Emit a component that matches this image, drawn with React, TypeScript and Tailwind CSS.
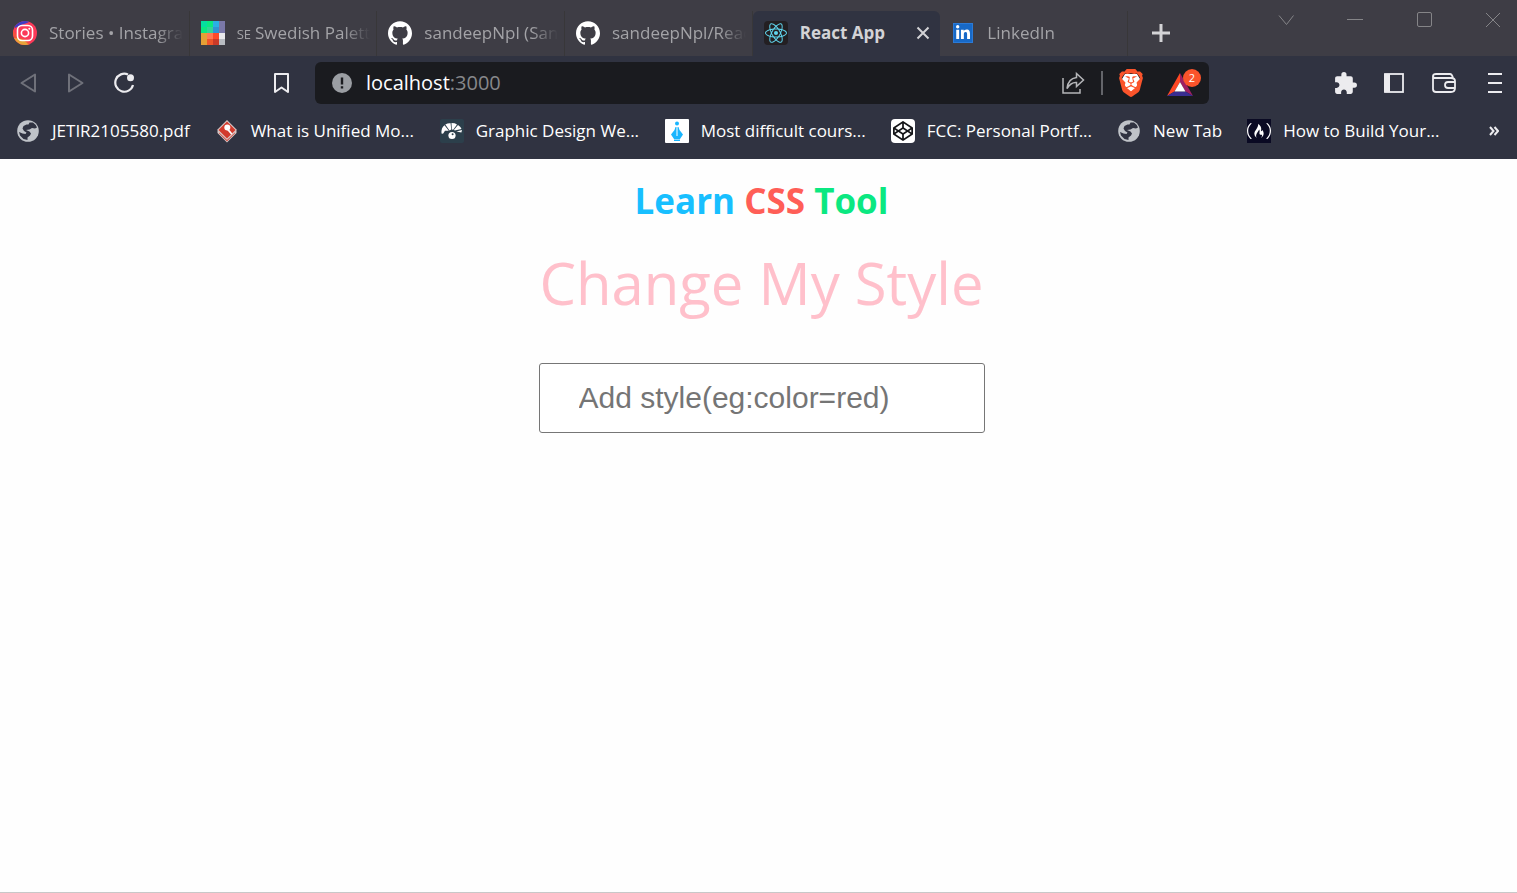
import { useState } from "react";
import type { ReactNode } from "react";
import { SiGithub, SiReact, SiBrave, SiFreecodecamp } from "react-icons/si";
import { MdExtension } from "react-icons/md";
import { FaCodepen, FaLinkedinIn } from "react-icons/fa";

const InstagramIcon = () => (
  <svg viewBox="0 0 24 24" className="size-6 shrink-0" aria-hidden="true">
    <defs>
      <clipPath id="ig-clip">
        <circle cx="12" cy="12" r="12" />
      </clipPath>
    </defs>
    <g clipPath="url(#ig-clip)">
      <rect width="24" height="24" fill="#fb3958" />
      <path d="M0 0h18l-4 2-6 2-6 3z" fill="#3f3cc4" />
      <path d="M0 8q3 6 6 8l8 3 4 5H0z" fill="#f5513c" />
      <path d="M1 17l7 1 5 3 3 3H4z" fill="#e8a33a" />
    </g>
    <rect x="4.500" y="4.500" width="15" height="15" rx="4.500" fill="none" stroke="#fff" strokeWidth="1.600" />
    <circle cx="12" cy="12" r="3.600" fill="none" stroke="#fff" strokeWidth="1.600" />
    <circle cx="16.300" cy="7.700" r="1" fill="#fff" />
  </svg>
);

const PaletteIcon = () => (
  <svg viewBox="0 0 24 24" className="size-6 shrink-0" shapeRendering="crispEdges" aria-hidden="true">
    <path fill="#0be881" d="M0 0h12v12H0z" />
    <path fill="#05dfa0" d="M0 0h6v6H0z" />
    <path fill="#34d399" d="M6 6h6v6H6z" />
    <path fill="#2ab0e4" d="M12 0h6v6h-6z" />
    <path fill="#3094d4" d="M12 6h6v6h-6z" />
    <path fill="#7a78a8" d="M18 0h6v12h-6z" />
    <path fill="#e5a035" d="M0 12h6v12H0z" />
    <path fill="#f0552a" d="M6 12h6v12H6z" />
    <path fill="#ff7a52" d="M6 12h6v6H6z" />
    <path fill="#ff4a28" d="M12 12h6v6h-6z" />
    <path fill="#c93a28" d="M12 18h6v6h-6z" />
    <path fill="#e9e9ec" d="M18 12h6v6h-6z" />
    <path fill="#b8bcc2" d="M18 18h6v6h-6z" />
  </svg>
);

const ReactIcon = () => (
  <span className="flex size-6 shrink-0 items-center justify-center rounded-sm bg-[#231f22]">
    <SiReact className="size-[22px] text-[#5fd3ec]" />
  </span>
);

const LinkedInIcon = () => (
  <span className="flex size-6 shrink-0 items-center justify-center">
    <span className="flex size-5 items-center justify-center border border-[#2b7ad6] bg-[#1769c7]">
      <FaLinkedinIn className="size-4 text-white" />
    </span>
  </span>
);

const GlobeIcon = () => (
  <svg viewBox="0 0 24 24" className="size-6 shrink-0" aria-hidden="true">
    <circle cx="12" cy="12" r="10.800" fill="#bfc3c8" />
    <path
      d="M13.500 3.500h3.500q3 2 4 5l-2 1-3-.5-2.500 1.500-3.500.5 3.500 1.500 1.500 2-1 2-2.500 2v2.500l-4-1-3.500-3.500-1-3.500 3.500 1.500 3 .5 1-1.500-2.500-1.500-1.500-2.500 1-2.500 3-1.500h2z"
      fill="#303341"
    />
  </svg>
);

const UmlIcon = () => (
  <svg viewBox="0 0 24 24" className="size-6 shrink-0" aria-hidden="true">
    <path d="M12 1L21.500 10.500v3.500L12 23.500 2.500 14v-3.500z" fill="#d9c8c6" />
    <path d="M12 2.500L20.500 11 12 19.500 3.500 11z" fill="#d23a2c" />
    <path d="M4 13.600l8 7.400 8-7.400v.6L12 22.300 4 14.200z" fill="#d23a2c" />
    <circle cx="12.300" cy="8.600" r="3" fill="#fff" />
    <path d="M12.500 8.500l-.4 2.500 4.200 4.700 1-1.200-2.600-3.300z" fill="#fff" />
  </svg>
);

const ChameleonIcon = () => (
  <svg viewBox="0 0 24 24" className="size-6 shrink-0" aria-hidden="true">
    <rect width="24" height="24" rx="2" fill="#2c3f4b" />
    <path d="M1.500 14.500Q1 8.500 4.500 6.200l4.300 5.600-3.800-.1-2 3z" fill="#fff" />
    <path d="M5.300 5.600Q8 3.800 10.600 4.200l.6 6.400-1.700.8z" fill="#fff" />
    <path d="M11.500 4q3.600 0 5.500 1.400l-3.800 5.400-1.400-.4z" fill="#fff" />
    <path d="M18 6q3 1.800 3.500 4l-6.800 1.400-.7-.7z" fill="#fff" />
    <path d="M22 11l-.6 2.600-5-1z" fill="#fff" />
    <circle cx="12" cy="16.500" r="3.600" fill="#fff" />
    <circle cx="12.600" cy="15.200" r="1" fill="#2c3f4b" />
  </svg>
);

const PenIcon = () => (
  <svg viewBox="0 0 24 24" className="size-6 shrink-0" aria-hidden="true">
    <rect width="24" height="24" rx="1" fill="#fff" />
    <circle cx="12" cy="4.500" r="2" fill="#19b5fe" />
    <path d="M10.500 8h3l1 3 3.500 4.500L15 20H9l-3-4.500L9.500 11z" fill="#19b5fe" />
    <path d="M9 20.500h6V22H9z" fill="#19b5fe" />
    <path d="M11.500 7h1v10h-1z" fill="#fff" />
  </svg>
);

const CodepenIcon = () => (
  <span className="flex size-6 shrink-0 items-center justify-center rounded-sm bg-white">
    <FaCodepen className="size-5 text-[#131417]" />
  </span>
);

const FreeCodeCampIcon = () => (
  <span className="flex size-6 shrink-0 items-center justify-center bg-[#0a0a23]">
    <SiFreecodecamp className="size-6 text-white" />
  </span>
);

type Tab = { title: string; icon: ReactNode; flag?: string; active?: boolean };

const tabs: Tab[] = [
  { title: "Stories • Instagram", icon: <InstagramIcon /> },
  { title: "Swedish Palette", flag: "SE", icon: <PaletteIcon /> },
  { title: "sandeepNpl (Sandeep)", icon: <SiGithub className="size-6 shrink-0 text-white" /> },
  { title: "sandeepNpl/React", icon: <SiGithub className="size-6 shrink-0 text-white" /> },
  { title: "React App", icon: <ReactIcon />, active: true },
  { title: "LinkedIn", icon: <LinkedInIcon /> },
];

type Bookmark = { title: string; icon: ReactNode; shortened?: boolean };

const bookmarks: Bookmark[] = [
  { title: "JETIR2105580.pdf", icon: <GlobeIcon /> },
  { title: "What is Unified Mo...", icon: <UmlIcon />, shortened: true },
  { title: "Graphic Design We...", icon: <ChameleonIcon />, shortened: true },
  { title: "Most difficult cours...", icon: <PenIcon />, shortened: true },
  { title: "FCC: Personal Portf...", icon: <CodepenIcon />, shortened: true },
  { title: "New Tab", icon: <GlobeIcon /> },
  { title: "How to Build Your...", icon: <FreeCodeCampIcon /> },
];

function TabStrip() {
  return (
    <div className="flex h-14 bg-[#3e3d45]">
      <div className="flex max-w-[1128px] flex-1 pt-[11px] pl-0.5">
        {tabs.map((tab) =>
          tab.active ? (
            <div
              key={tab.title}
              className="flex h-[45px] min-w-0 flex-1 items-center gap-3 rounded-t-md bg-[#303341] pr-[7px] pb-0.5 pl-[11px]"
            >
              {tab.icon}
              <span className="flex-1 truncate text-[17px] font-bold text-[#d3d3d6]">{tab.title}</span>
              <button aria-label="Close tab" className="mr-0.5 text-[#d3d3d6]">
                <svg viewBox="0 0 16 16" className="size-4" fill="none" stroke="currentColor" strokeWidth="2">
                  <path d="M2.500 2.500l11 11M13.500 2.500l-11 11" />
                </svg>
              </button>
            </div>
          ) : (
            <button
              key={tab.title}
              className="flex h-[45px] min-w-0 flex-1 items-center gap-3 border-r border-[#383739] pr-1.5 pb-0.5 pl-[11px] text-left"
            >
              {tab.icon}
              <span className="flex-1 overflow-hidden mask-r-from-80% mask-r-to-100% text-[17px] whitespace-nowrap text-[#a3a3a7]">
                {tab.flag && <span className="mr-1 text-[13px]">{tab.flag}</span>}
                {tab.title}
              </span>
            </button>
          ),
        )}
      </div>
      <button aria-label="New tab" className="ml-5 px-1 pt-2.5 text-[#d3d3d6]">
        <svg viewBox="0 0 18 18" className="size-[18px]" fill="none" stroke="currentColor" strokeWidth="3">
          <path d="M9 0v18M0 9h18" />
        </svg>
      </button>
      <div className="ml-auto flex items-start gap-[53px] pt-3 pr-4 text-[#858588]">
        <button aria-label="Search tabs">
          <svg viewBox="0 0 16 16" className="size-4" fill="none" stroke="currentColor">
            <path d="M1 3.500l7.500 9 7-9" />
          </svg>
        </button>
        <button aria-label="Minimize">
          <svg viewBox="0 0 16 16" className="size-4" fill="none" stroke="currentColor">
            <path d="M0 7.500h16" />
          </svg>
        </button>
        <button aria-label="Maximize">
          <svg viewBox="0 0 16 16" className="size-4" fill="none" stroke="currentColor">
            <rect x="1.500" y=".5" width="14" height="14" rx="1.500" />
          </svg>
        </button>
        <button aria-label="Close window">
          <svg viewBox="0 0 16 16" className="size-4" fill="none" stroke="currentColor">
            <path d="M1 1l14 14M15 1L1 15" />
          </svg>
        </button>
      </div>
    </div>
  );
}

function AddressBar() {
  return (
    <div className="flex h-[42px] min-w-0 max-w-[894px] flex-1 items-center rounded-md bg-[#1a1b1f] pr-1 pl-[17px]">
      <svg viewBox="0 0 20 20" className="size-5 shrink-0" aria-hidden="true">
        <circle cx="10" cy="10" r="10" fill="#9b9ea3" />
        <path d="M8.800 4.500h2.400v7H8.800zM8.800 13.200h2.400v2.400H8.800z" fill="#1a1b1f" />
      </svg>
      <a href="#" aria-label="Site address" className="ml-3.5 flex-1 text-[20px] text-[#87888b]">
        <span className="text-white">localhost</span>:3000
      </a>
      <button aria-label="Share" className="text-[#b5b6b9]">
        <svg viewBox="0 0 24 24" className="size-6" fill="none" stroke="currentColor" strokeWidth="1.500">
          <path d="M2 7v15h17v-4" />
          <path d="M15.500 2.500l7 6.500-7 6.500v-4Q10 11 6 17.500 7 7.500 15.500 6.500z" />
        </svg>
      </button>
      <span className="mx-4 h-6 w-0.5 bg-[#64656a]" />
      <button aria-label="Shields" className="mr-6">
        <svg viewBox="0 0 24 28" className="h-7 w-6" aria-hidden="true">
          <path d="M6 5h12l3 5-2.500 9-6.500 4.500L5.500 19 3 10z" fill="#fff" />
          <SiBrave x="-2" y="0" size={28} color="#fb542b" />
        </svg>
      </button>
      <button aria-label="Rewards" className="relative h-8 w-[38px]">
        <svg viewBox="0 0 26 24" className="mt-1 h-6 w-[26px]" aria-hidden="true">
          <path d="M13 0L0 23l7.500-4.500L13 9z" fill="#ff4724" />
          <path d="M13 0l13 23-7.500-4.500L13 9z" fill="#9e1f63" />
          <path d="M0 23h26l-7.500-4.500h-11z" fill="#392d91" />
          <path d="M13 9l5.500 9.500h-11z" fill="#fff" />
        </svg>
        <span className="absolute top-0.5 right-1 flex size-[18px] items-center justify-center rounded-full bg-[#fb542b] text-[11px] text-white">
          2
        </span>
      </button>
    </div>
  );
}

function Toolbar() {
  return (
    <div className="flex h-[54px] items-center">
      <div className="flex w-[315px] shrink-0 items-center pr-6 pl-5">
        <button aria-label="Back" className="text-[#6f717a]">
          <svg viewBox="0 0 16 20" className="h-5 w-4" fill="none" stroke="currentColor" strokeWidth="2" strokeLinejoin="round">
            <path d="M15 1.500v17L1.500 10z" />
          </svg>
        </button>
        <button aria-label="Forward" className="ml-8 text-[#6f717a]">
          <svg viewBox="0 0 16 20" className="h-5 w-4" fill="none" stroke="currentColor" strokeWidth="2" strokeLinejoin="round">
            <path d="M1 1.500v17L14.500 10z" />
          </svg>
        </button>
        <button aria-label="Reload" className="ml-[29px] text-[#ececef]">
          <svg viewBox="0 0 22 22" className="size-[22px]" aria-hidden="true">
            <path d="M15 2.500A9 9 0 1 0 20 13" fill="none" stroke="currentColor" strokeWidth="2.200" />
            <circle cx="17.500" cy="5.700" r="3.500" fill="currentColor" />
          </svg>
        </button>
        <button aria-label="Bookmark this page" className="ml-auto text-[#ececef]">
          <svg viewBox="0 0 20 22" className="h-[22px] w-5" fill="none" stroke="currentColor" strokeWidth="2" strokeLinejoin="round">
            <path d="M4 2h13v18l-6.500-4.500L4 20z" />
          </svg>
        </button>
      </div>
      <AddressBar />
      <div className="ml-auto flex items-center gap-6 pr-[15px] text-[#ececef]">
        <button aria-label="Extensions" className="mr-0.5">
          <MdExtension className="size-[25px]" />
        </button>
        <button aria-label="Sidebar">
          <svg viewBox="0 0 20 20" className="size-5" aria-hidden="true">
            <rect x="1" y="1" width="18" height="18" fill="none" stroke="currentColor" strokeWidth="1.800" />
            <path d="M0 1h6v18H0z" fill="currentColor" />
          </svg>
        </button>
        <button aria-label="Wallet" className="ml-1">
          <svg viewBox="0 0 24 20" className="h-5 w-6" fill="none" stroke="currentColor" strokeWidth="1.800">
            <path d="M1 3v13q0 3 3 3h15q4 0 4-4V8q0-3-4-3H3Q1 5 1 3q0-2 3-2h14q2 0 3 4" />
            <path d="M23 9h-7a3 3 0 0 0 0 6h7" />
          </svg>
        </button>
        <button aria-label="Menu" className="ml-2">
          <svg viewBox="0 0 14 20" className="h-5 w-3.5" fill="none" stroke="currentColor" strokeWidth="2">
            <path d="M0 1h14M0 10h14M0 19h14" />
          </svg>
        </button>
      </div>
    </div>
  );
}

function BookmarksBar() {
  return (
    <nav aria-label="Bookmarks" className="flex h-[49px] items-center gap-[25px] pr-[18px] pb-2 pl-4 text-[17px] text-white">
      {bookmarks.map((b) => (
        <a key={b.title} href="#" className="flex items-center gap-3 whitespace-nowrap">
          {b.icon}
          <span className={b.shortened ? "min-w-[164px]" : ""}>{b.title}</span>
        </a>
      ))}
      <button aria-label="More bookmarks" className="ml-auto text-[#ececef]">
        <svg viewBox="0 0 10 10" className="size-2.5" fill="none" stroke="currentColor" strokeWidth="2">
          <path d="M1 1l3.500 4L1 9M5.500 1L9 5 5.500 9" />
        </svg>
      </button>
    </nav>
  );
}

export default function App() {
  const [style, setStyle] = useState("");
  return (
    <div className="flex min-h-screen flex-col bg-[#fefefe] font-['Open_Sans','Noto_Sans',sans-serif]">
      <header>
        <TabStrip />
        <div className="bg-[#303341]">
          <Toolbar />
          <BookmarksBar />
        </div>
      </header>
      <main className="flex flex-1 flex-col items-center border-b border-[#c8c8c8] pt-4 pl-1.5">
        <h1 className="text-[35px] leading-[52px] font-bold">
          <span className="text-[#18bfff]">Learn</span> <span className="text-[#ff5e57]">CSS</span>{" "}
          <span className="text-[#0be881]">Tool</span>
        </h1>
        <p className="mt-4 text-[58px] leading-[80px] text-[#ffc0cb]">Change My Style</p>
        <input
          type="text"
          aria-label="Style"
          placeholder="Add style(eg:color=red)"
          value={style}
          onChange={(e) => setStyle(e.target.value)}
          className="mt-10 h-[70px] w-[446px] max-w-full rounded-[3px] border border-[#767676] bg-white px-[39px] font-['Liberation_Sans',Arial,sans-serif] text-[30px] text-black placeholder:text-[#757575]"
        />
      </main>
    </div>
  );
}
